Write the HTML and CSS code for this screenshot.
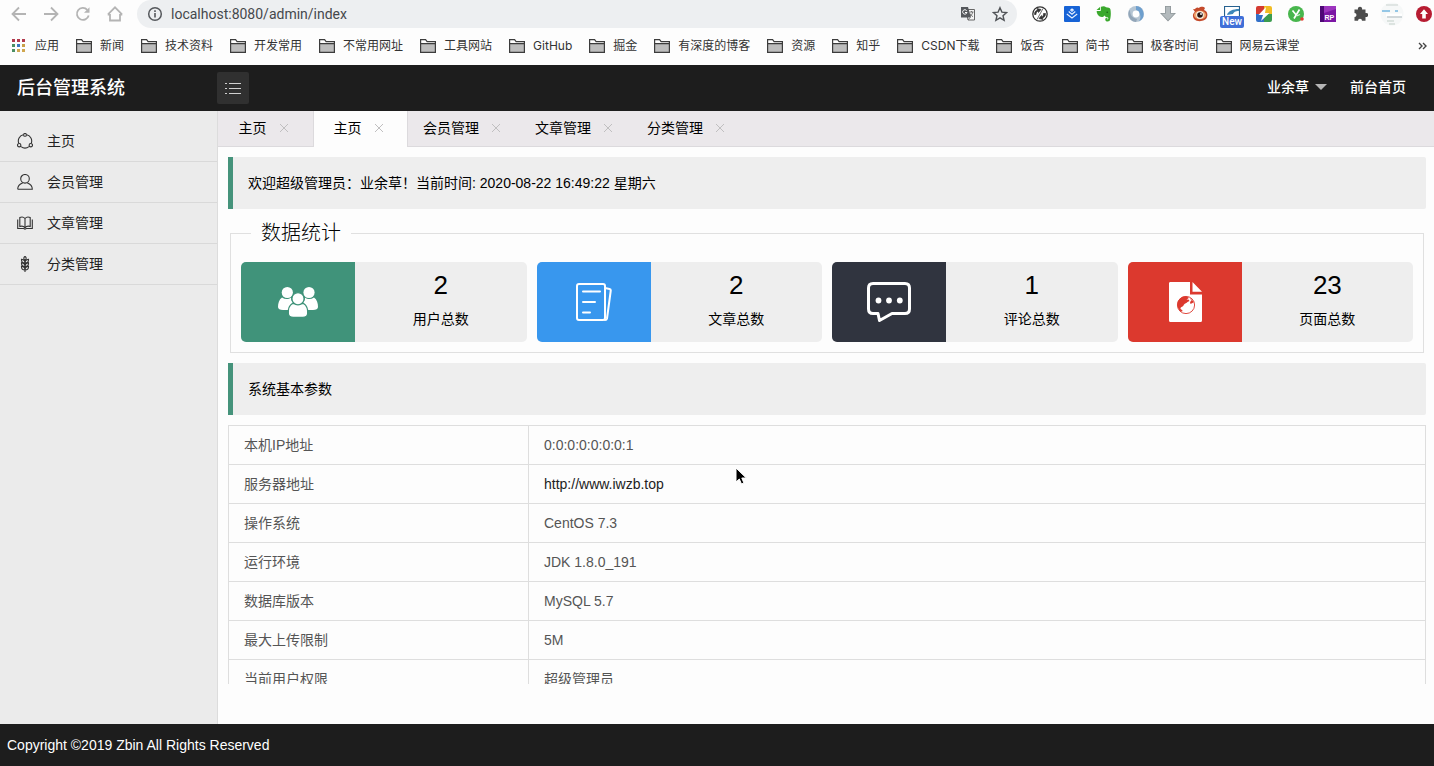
FILE: index.html
```html
<!DOCTYPE html>
<html lang="zh-CN">
<head>
<meta charset="utf-8">
<title>后台管理系统</title>
<link rel="stylesheet" href="styles.css">
</head>
<body>
<svg class="defs" aria-hidden="true">
  <symbol id="folder" viewBox="0 0 16 14"><path d="M.5 13V1h5l1.500 2H15.500V13Z" fill="#fff"/><path d="M1 5h14v8H1z" fill="#bdbdbd"/><path d="M.6 13.300V.7h5l1.500 1.900h8.300v10.700ZM.6 4.600h14.800" fill="none" stroke="#3c3c3c" stroke-width="1.200"/></symbol>
  <symbol id="close" viewBox="0 0 10 10"><path d="M1 1l8 8M9 1L1 9" fill="none" stroke="#c0bfc0" stroke-width="1"/></symbol>
</svg>

<div class="browser">
  <div class="toolbar">
    <div class="nav">
      <button class="icon-btn" aria-label="后退"><svg width="16" height="16" viewBox="0 0 16 16"><path d="M15 8H2M8 1.500L1.500 8 8 14.500" /></svg></button>
      <button class="icon-btn" aria-label="前进"><svg width="16" height="16" viewBox="0 0 16 16"><path d="M1 8h13M8 1.500L14.500 8 8 14.500"/></svg></button>
      <button class="icon-btn" aria-label="刷新"><svg width="16" height="16" viewBox="0 0 16 16"><path d="M13.700 9.500A6 6 0 1 1 12.300 3.800"/><path d="M14.500 1.200v5.600H9z" class="solid"/></svg></button>
      <button class="icon-btn" aria-label="首页"><svg width="16" height="16" viewBox="0 0 16 16"><path d="M3 8v6.500h10V8M.7 8.500H3M13 8.500h2.300M1 8.400L8 1.300l7 7.100"/></svg></button>
    </div>
    <div class="address">
      <svg width="16" height="16" viewBox="0 0 16 16"><circle cx="8" cy="8" r="6.300" fill="none" stroke="#55585c" stroke-width="1.500"/><path d="M8 7v4.500M8 4.200v1.700" stroke="#55585c" stroke-width="1.600"/></svg>
      <input class="url" type="text" aria-label="地址" value="localhost:8080/admin/index">
      <button class="icon-btn inner" aria-label="翻译"><svg width="16" height="16" viewBox="0 0 16 16"><path d="M6 3.500h8.500v10.500H8z" fill="#f4f4f4" stroke="#666" stroke-width="1"/><path d="M1 1h7l3 10.500H1z" fill="#55585c"/><path d="M6.700 4.700A2.200 2.200 0 1 0 7 6.500H5" fill="none" stroke="#fff" stroke-width="1"/><path d="M9.500 6h4M11.500 5v1M12.700 6c-.3 2-1.200 3-2.700 4M10 7.500c.6 1.500 1.800 2.600 3 3.200M8 14l2-2.500" fill="none" stroke="#666" stroke-width=".9"/></svg></button>
      <button class="icon-btn inner" aria-label="收藏"><svg width="16" height="16" viewBox="0 0 16 16"><path d="M8 1.700l1.900 4.400 4.700.4-3.600 3.200 1.100 4.600L8 11.800l-4.100 2.500L5 9.700 1.400 6.500l4.700-.4z" fill="none" stroke="#505357" stroke-width="1.400"/></svg></button>
    </div>
    <div class="extensions">
      <svg viewBox="0 0 16 16"><circle cx="8" cy="8" r="7.200" fill="#fff" stroke="#333" stroke-width="1.300"/><path d="M5 13.500L11 2.500M2.500 8.500c0-3 1.500-4 3-4.500l-.5-1.500 4 1-2.500 3-.5-1.500C4.500 5.500 4 7 4 8.500zM13.500 7.500c0 3-1.500 4-3 4.500l.5 1.500-4-1 2.500-3 .5 1.500c1-.5 1.500-2 1.500-3.500z" fill="#333" stroke="#333" stroke-width=".7"/></svg>
      <svg viewBox="0 0 16 16"><rect width="16" height="16" rx="1" fill="#1763d6"/><path d="M8 3l1.300 1.100L8 5.200 6.700 4.100zM4.700 5.500L8 8.200l3.300-2.700M2.800 8L8 12l5.200-4" fill="none" stroke="#e8f1ff" stroke-width="1.100"/></svg>
      <svg viewBox="0 0 16 16"><path d="M5 .8c2-1 4-.7 5 .5 2 .1 4 .5 4.400 2 .7 3 .5 8-.5 11-.5 1.500-4 1.700-4.500 0-.5-2 .5-3 2.200-2.500v1h-1c0 1 1.600.7 1.700-.3.100-1-.9-1.500-1.900-1.500-1.500 0-1.500-1.500-2-1.500C7 12 3.500 11 2 9 .8 7.500.5 5.500.8 5h3.700L5 4z" fill="#3aa82d"/><path d="M.6 4L4.200.8V4z" fill="#3aa82d"/><circle cx="11.200" cy="6.300" r=".8" fill="#1b5f18"/></svg>
      <svg viewBox="0 0 16 16"><circle cx="8" cy="8" r="8" fill="#b5c5d3"/><path d="M8 0a8 8 0 0 1 3 15.200C14 11 12 6 8 4z" fill="#6e9fce"/><path d="M8 16a8 8 0 0 1-6-12.500C2 9 4 12 9 13z" fill="#93a6b8"/><circle cx="8" cy="8" r="3.400" fill="#fff"/></svg>
      <svg viewBox="0 0 16 16"><path d="M5 0h6v7h5l-8 8.500L0 7h5z" fill="#8f979a"/><path d="M5.800.8h4.400v7h4L8 14.300 1.800 7.800h4z" fill="#b3babd"/></svg>
      <svg viewBox="0 0 16 16"><path d="M1 3c3 1 3-3 6-1 2-2 5-1 6 0l-1 2c3 1 4 4 3 7-1 4-9 6-13 2-2-3-1-6 1-7z" fill="#c44a2b"/><ellipse cx="8" cy="9" rx="6" ry="4.300" fill="#f1ab74"/><circle cx="8" cy="9" r="3.700" fill="#fff"/><circle cx="8" cy="9" r="2.800" fill="#2c1712"/><circle cx="9" cy="8" r=".9" fill="#fff"/></svg>
      <span class="ext-badged"><svg viewBox="0 0 16 16"><path d="M.5 10V.5h15V10" fill="#fff" stroke="#27618f" stroke-width="1.200"/><path d="M3 9c1-4 6-6 12-6v2c-4 0-5 1-6 3z" fill="#3e87b9"/></svg><span class="badge">New</span></span>
      <svg viewBox="0 0 16 16"><path d="M2 0h6v8H0V2a2 2 0 0 1 2-2z" fill="#d43a31"/><path d="M8 0h6a2 2 0 0 1 2 2v6H8z" fill="#f1bc24"/><path d="M0 8h8v8H2a2 2 0 0 1-2-2z" fill="#3270c8"/><path d="M8 8h8v6a2 2 0 0 1-2 2H8z" fill="#3c9c50"/><path d="M10 1L2.500 9H7l-2 6 8.500-8H9z" fill="#fff"/></svg>
      <svg viewBox="0 0 16 16"><circle cx="8" cy="8" r="8" fill="#48b64d"/><path d="M4.500 4.500l3.300 4M11.500 3.500L6 12.500" stroke="#fff" stroke-width="1.700" fill="none"/><path d="M8.500 10l3.500-1.500" stroke="#d7f3d8" stroke-width="1.300"/><circle cx="14" cy="13" r="1.800" fill="#e43d34"/></svg>
      <svg viewBox="0 0 16 16"><rect width="16" height="16" fill="#7c16a5"/><path d="M0 0h4v16H0z" fill="#4d0875"/><path d="M4 0h12v3L4 7z" fill="#9c35be"/><text x="4.500" y="14" class="rp">RP</text></svg>
      <svg viewBox="0 0 16 16"><path d="M2.500 3.500H6A2.100 2.100 0 1 1 10 3.500h3.500V7A2.100 2.100 0 1 1 13.500 11v3.700H10a2 2 0 1 0-4 0H2.500V11A2 2 0 1 0 2.500 7z" fill="#4c4c4c"/></svg>
      <svg class="avatar" viewBox="0 0 24 24"><circle cx="12" cy="12" r="11.500" fill="#f6f8f8"/><path d="M6 3h12" stroke="#c9d2cf"/><path d="M2 9h8M15 9h3" stroke="#76b6df" stroke-width="1.500"/><path d="M6 13h16" stroke="#fff" stroke-width="3"/><path d="M7 15h15" stroke="#a9b5ba"/><path d="M7 19h7M9 22h6" stroke="#c2cfc8"/></svg>
      <svg viewBox="0 0 16 16"><circle cx="8" cy="8" r="8" fill="#b71c32"/><path d="M8 3.200L12 8H9.800v4.500H6.200V8H4z" fill="#fff"/></svg>
    </div>
  </div>
  <nav class="bookmarks" aria-label="书签">
    <a href="#"><svg class="apps" width="16" height="14" viewBox="0 0 16 14"><path d="M1 0h3v3H1zM6 0h3v3H6zM11 0h3v3h-3z" fill="#b23a4d"/><path d="M1 5h3v3H1z" fill="#4b8f63"/><path d="M6 5h3v3H6z" fill="#3a78c0"/><path d="M11 5h3v3h-3z" fill="#c8a048"/><path d="M1 10h3v3H1z" fill="#4b8f63"/><path d="M6 10h3v3H6zM11 10h3v3h-3z" fill="#d0a74f"/></svg>应用</a>
    <a href="#"><svg width="16" height="14"><use href="#folder"/></svg>新闻</a>
    <a href="#"><svg width="16" height="14"><use href="#folder"/></svg>技术资料</a>
    <a href="#"><svg width="16" height="14"><use href="#folder"/></svg>开发常用</a>
    <a href="#"><svg width="16" height="14"><use href="#folder"/></svg>不常用网址</a>
    <a href="#"><svg width="16" height="14"><use href="#folder"/></svg>工具网站</a>
    <a href="#"><svg width="16" height="14"><use href="#folder"/></svg>GitHub</a>
    <a href="#"><svg width="16" height="14"><use href="#folder"/></svg>掘金</a>
    <a href="#"><svg width="16" height="14"><use href="#folder"/></svg>有深度的博客</a>
    <a href="#"><svg width="16" height="14"><use href="#folder"/></svg>资源</a>
    <a href="#"><svg width="16" height="14"><use href="#folder"/></svg>知乎</a>
    <a href="#"><svg width="16" height="14"><use href="#folder"/></svg>CSDN下载</a>
    <a href="#"><svg width="16" height="14"><use href="#folder"/></svg>饭否</a>
    <a href="#"><svg width="16" height="14"><use href="#folder"/></svg>简书</a>
    <a href="#"><svg width="16" height="14"><use href="#folder"/></svg>极客时间</a>
    <a href="#"><svg width="16" height="14"><use href="#folder"/></svg>网易云课堂</a>
    <button class="more" aria-label="更多书签"><svg width="9" height="8" viewBox="0 0 9 8"><path d="M1 1l3 3-3 3M5 1l3 3-3 3" fill="none" stroke="#444" stroke-width="1.400"/></svg></button>
  </nav>
</div>

<header class="header">
  <h1 class="logo">后台管理系统</h1>
  <button class="toggle" aria-label="切换菜单"><svg width="16" height="12" viewBox="0 0 16 12"><path d="M0 1.500h2M4 1.500h12M0 6.500h2M4 6.500h12M0 11.500h2M4 11.500h12" stroke="#d0d0d0" stroke-width="1"/></svg></button>
  <div class="header-right">
    <button class="user">业余草<span class="caret"></span></button>
    <a href="#">前台首页</a>
  </div>
</header>

<div class="body">
  <nav class="sidebar" aria-label="主菜单">
    <a href="#"><svg viewBox="0 0 16 16"><path d="M6.200 1.700A6.500 6.500 0 0 0 1.700 10.200M9.800 1.700a6.500 6.500 0 0 1 4.500 8.500M4 13.600a6.700 6.700 0 0 0 8 0"/><circle cx="8" cy="1.900" r="1.400"/><circle cx="2.200" cy="12.200" r="1.700"/><circle cx="13.800" cy="12.200" r="1.700"/></svg>主页</a>
    <a href="#"><svg viewBox="0 0 16 16"><circle cx="8" cy="4.800" r="4.300"/><path d="M.7 15.300c0-3.400 2.600-5.500 5-6.300M10.300 9c2.400.8 5 2.900 5 6.300H.7"/></svg>会员管理</a>
    <a href="#"><svg viewBox="0 0 16 16"><path d="M8 3.500v9.300M8 3.500C6.500 1.700 4.500 1.700 2.800 2.500v9c1.900-.7 3.700-.5 5.200 1.300 1.500-1.800 3.300-2 5.200-1.300v-9C11.500 1.700 9.500 1.700 8 3.500M.7 4.500v9h5.800c.6.800 2.400.8 3 0h5.800v-9"/></svg>文章管理</a>
    <a href="#"><svg viewBox="0 0 16 16"><path d="M8 4v12M8 4C6.300 3 6.500 1.500 8 .3 9.500 1.500 9.700 3 8 4M8 7C5.500 7 4.300 5.800 4.500 3.300 6.800 3.700 8 4.700 8 7c0-2.300 1.200-3.300 3.500-3.700C11.700 5.800 10.500 7 8 7M8 10.500C5.500 10.500 4.300 9.300 4.500 6.800 6.800 7.200 8 8.200 8 10.500c0-2.300 1.200-3.300 3.500-3.700.2 2.500-1 3.700-3.500 3.700M8 14c-2.500 0-3.700-1.200-3.500-3.700C6.800 10.700 8 11.700 8 14c0-2.300 1.200-3.300 3.500-3.700.2 2.500-1 3.700-3.500 3.700"/></svg>分类管理</a>
  </nav>

  <main class="main">
    <div class="tabs">
      <div class="tab"><a href="#">主页</a><button aria-label="关闭主页"><svg width="10" height="10"><use href="#close"/></svg></button></div>
      <div class="tab active"><a href="#">主页</a><button aria-label="关闭主页"><svg width="10" height="10"><use href="#close"/></svg></button></div>
      <div class="tab"><a href="#">会员管理</a><button aria-label="关闭会员管理"><svg width="10" height="10"><use href="#close"/></svg></button></div>
      <div class="tab"><a href="#">文章管理</a><button aria-label="关闭文章管理"><svg width="10" height="10"><use href="#close"/></svg></button></div>
      <div class="tab"><a href="#">分类管理</a><button aria-label="关闭分类管理"><svg width="10" height="10"><use href="#close"/></svg></button></div>
    </div>

    <div class="pane">
      <div class="quote">欢迎超级管理员：业余草！当前时间: 2020-08-22 16:49:22 星期六</div>

      <fieldset class="stats">
        <legend>数据统计</legend>
        <div class="cards">
          <div class="card">
            <div class="card-icon green"><svg width="40" height="32" viewBox="0 0 40 32"><g fill="#fff"><circle cx="9.300" cy="6.500" r="5.600"/><circle cx="31" cy="6.500" r="5.600"/><path d="M4 11.500c-3 2-4 6-4 9.500 0 2 2 3 5 3h6c.5-4 2-6 4-7.500-1.500-1.300-2-3-2-5-2.500 2-6 2-9 0zM36 11.500c3 2 4 6 4 9.500 0 2-2 3-5 3h-6c-.5-4-2-6-4-7.500 1.500-1.300 2-3 2-5 2.500 2 6 2 9 0z"/></g><g fill="#fff" stroke="#40937a" stroke-width="1.300"><path d="M14.500 17.500c-3.500 2-4.500 6-4.200 10 .2 2.500 2 3.800 5 3.800h9.500c3 0 4.700-1.300 4.900-3.800.3-4-1-8-4.200-10z"/><circle cx="20" cy="12.700" r="6.100"/></g></svg></div>
            <div class="card-text"><strong>2</strong><span>用户总数</span></div>
          </div>
          <div class="card">
            <div class="card-icon blue"><svg width="36" height="40" viewBox="0 0 36 40"><g fill="none" stroke="#fff" stroke-width="2" stroke-linecap="round" stroke-linejoin="round"><rect x="1" y="2" width="28" height="36" rx="2"/><path d="M7 9.500h17M7 20h12M7 30.500h7M29 6l4.500 1q1.500.3 1.200 2L31 36.500q-.3 1.500-2 1.500"/></g></svg></div>
            <div class="card-text"><strong>2</strong><span>文章总数</span></div>
          </div>
          <div class="card">
            <div class="card-icon dark"><svg width="44" height="40" viewBox="0 0 44 40"><path d="M6 1.500h32q4.500 0 4.500 4.500v21q0 4.500-4.500 4.500H25L12.500 38.500 11 31.500H6Q1.500 31.500 1.500 27V6Q1.500 1.500 6 1.500z" fill="none" stroke="#fff" stroke-width="3" stroke-linejoin="round"/><g fill="#fff"><circle cx="11.500" cy="18.500" r="2.900"/><circle cx="22" cy="18.500" r="2.900"/><circle cx="32.800" cy="18.500" r="2.900"/></g></svg></div>
            <div class="card-text"><strong>1</strong><span>评论总数</span></div>
          </div>
          <div class="card">
            <div class="card-icon red"><svg width="34" height="40" viewBox="0 0 34 40"><path d="M2 0h20v12.500h12V38.500q0 1.500-1.500 1.500h-30Q1 40 1 38.500V1.500Q1 0 2 0zM24.500 0L34 9.800H24.500z" fill="#fff"/><circle cx="18" cy="23" r="8.600" fill="none" stroke="#dc392e" stroke-width=".9"/><path d="M18 14.300c-3 0-6 1.400-7.800 4.500-1.700 3.700-.6 7.500 1.800 10 1.700 1.500 3 .7 2.200-.8-.7-.6-2-.4-1.700-2 .5-1.600 2.500-1 3-2.600 1-2.400 2.500-1.400 4-3.400l2-1-1-1.500-2 .3 2.500-2zM21 15l5 5-1.500 1-2 1-.5-2 1.500-1.500z" fill="#dc392e"/></svg></div>
            <div class="card-text"><strong>23</strong><span>页面总数</span></div>
          </div>
        </div>
      </fieldset>

      <div class="quote">系统基本参数</div>

      <table class="params">
        <tbody>
          <tr><th scope="row">本机IP地址</th><td>0:0:0:0:0:0:0:1</td></tr>
          <tr><th scope="row">服务器地址</th><td><a href="#">http://www.iwzb.top</a></td></tr>
          <tr><th scope="row">操作系统</th><td>CentOS 7.3</td></tr>
          <tr><th scope="row">运行环境</th><td>JDK 1.8.0_191</td></tr>
          <tr><th scope="row">数据库版本</th><td>MySQL 5.7</td></tr>
          <tr><th scope="row">最大上传限制</th><td>5M</td></tr>
          <tr><th scope="row">当前用户权限</th><td>超级管理员</td></tr>
        </tbody>
      </table>
    </div>
  </main>
</div>

<footer class="footer">Copyright ©2019 Zbin All Rights Reserved</footer>

<svg class="cursor" width="14" height="20" viewBox="0 0 14 20" aria-hidden="true"><path d="M1 1v14l3.300-3 2.200 5 2.400-1-2.100-5h4.500z" fill="#000" stroke="#fff" stroke-width="1"/></svg>
</body>
</html>
```
FILE: styles.css
```css
* {
  box-sizing: border-box;
}

body {
  margin: 0;
  height: 100vh;
  display: flex;
  flex-direction: column;
  overflow: hidden;
  background: #fdfdfd;
  color: #000;
  font: 14px/24px "Liberation Sans", "Noto Sans CJK SC", sans-serif;
}

a {
  color: inherit;
  text-decoration: none;
}

button {
  border: 0;
  padding: 0;
  background: none;
  color: inherit;
  font: inherit;
  cursor: pointer;
}

svg {
  display: block;
  flex: none;
}

.defs {
  position: absolute;
  width: 0;
  height: 0;
}

/* Browser chrome */
.toolbar {
  display: flex;
  height: 28px;
  padding: 0 2px 0 3px;
}

.nav {
  display: flex;
  margin-right: 6px;
}

.icon-btn {
  display: flex;
  align-items: center;
  justify-content: center;
  width: 32px;
}

.nav path {
  fill: none;
  stroke: #b4b4b4;
  stroke-width: 1.8;
}

.nav .solid {
  fill: #b4b4b4;
  stroke: none;
}

.address {
  flex: 1;
  display: flex;
  align-items: center;
  min-width: 0;
  padding: 0 1px 0 10px;
  border-radius: 14px;
  background: #edeff1;
}

.url {
  flex: 1;
  min-width: 0;
  margin-left: 8px;
  padding: 0;
  border: 0;
  outline: 0;
  background: none;
  color: #45484c;
  font: 14px/20px Roboto, "Noto Sans CJK SC", sans-serif;
}

.extensions {
  display: flex;
  align-items: center;
  gap: 16px;
  margin-left: 15px;
}

.extensions svg {
  width: 16px;
  height: 16px;
}

.extensions .avatar {
  width: 24px;
  height: 24px;
  margin: 0 -4px;
}

.rp {
  fill: #fff;
  font: bold 7px "Liberation Sans", sans-serif;
}

.ext-badged {
  position: relative;
}

.badge {
  position: absolute;
  top: 10px;
  left: -4px;
  width: 24px;
  border-radius: 2px;
  background: #3f6fd8;
  color: #fff;
  font: 500 10px/12px Roboto, sans-serif;
  text-align: center;
}

.bookmarks {
  display: flex;
  align-items: center;
  gap: 17px;
  height: 37px;
  padding: 0 7px 2px 11px;
  color: #333;
  font: 12px/16px Inter, "Noto Sans CJK SC", sans-serif;
  white-space: nowrap;
}

.bookmarks a {
  display: flex;
  align-items: center;
  gap: 8px;
}

.more {
  margin-left: auto;
}

/* Application header */
.header {
  display: flex;
  align-items: center;
  height: 46px;
  flex: none;
  background: #1d1d1d;
  color: #fff;
}

.logo {
  width: 217px;
  margin: 0;
  padding-left: 17px;
  font-size: 18px;
  font-weight: 500;
}

.toggle {
  display: flex;
  align-items: center;
  justify-content: center;
  width: 32px;
  height: 32px;
  border-radius: 2px;
  background: #303030;
}

.header-right {
  display: flex;
  gap: 23px;
  margin-left: auto;
  padding: 0 28px 2px 0;
  font-weight: 500;
}

.user {
  display: flex;
  align-items: center;
  gap: 6px;
}

.caret {
  border: 6px solid transparent;
  border-top-color: #b5b5b5;
  border-bottom: 0;
}

/* Layout */
.body {
  flex: 1;
  display: flex;
  min-height: 0;
}

.sidebar {
  width: 218px;
  flex: none;
  padding-top: 10px;
  border-right: 1px solid #dcdcdc;
  background: #ebebeb;
  color: #222;
}

.sidebar a {
  display: flex;
  align-items: center;
  gap: 14px;
  height: 41px;
  padding-left: 17px;
  border-bottom: 1px solid #d9d9d9;
}

.sidebar svg {
  width: 16px;
  height: 16px;
  fill: none;
  stroke: #333;
  stroke-width: 1.1;
}

.main {
  flex: 1;
  display: flex;
  flex-direction: column;
  min-width: 0;
  padding-bottom: 40px;
}

.tabs {
  display: flex;
  flex: none;
  height: 36px;
  border-bottom: 1px solid #dcdadd;
  background: #ebe8eb;
}

.tab {
  display: flex;
  align-items: center;
  justify-content: center;
  gap: 8px;
  min-width: 95px;
  height: 35px;
  padding: 0 15px 2px;
}

.tab button {
  display: flex;
  align-items: center;
  justify-content: center;
  width: 18px;
  height: 18px;
}

.tab.active {
  height: 36px;
  padding-bottom: 3px;
  border: solid #dcdadd;
  border-width: 0 1px;
  background: #fdfdfd;
}

.pane {
  flex: 1;
  min-height: 0;
  overflow: hidden;
  padding: 10px 8px 0 10px;
}

.quote {
  padding: 14px 15px;
  border-left: 5px solid #45937b;
  border-radius: 0 2px 2px 0;
  background: #eee;
}

/* Statistics */
.stats {
  min-width: 0;
  margin: 9px 2px 10px;
  padding: 14px 10px 10px;
  border: 1px solid #e0e0e0;
}

.stats legend {
  margin-left: 10px;
  padding: 0 10px;
  font-size: 20px;
  font-weight: 300;
  line-height: 30px;
}

.cards {
  display: grid;
  grid-template-columns: repeat(4, 1fr);
  gap: 10px;
}

.card {
  display: grid;
  grid-template-columns: 2fr 3fr;
  height: 80px;
  border-radius: 5px;
  overflow: hidden;
  background: #eee;
}

.card-icon {
  display: flex;
  align-items: center;
  justify-content: center;
}

.green { background: #40937a; }
.blue { background: #3897ee; }
.dark { background: #30343f; }
.red { background: #dc392e; }

.card-text {
  display: flex;
  flex-direction: column;
  align-items: center;
  padding-top: 8px;
}

.card-text strong {
  margin-bottom: 7px;
  font-size: 26px;
  font-weight: 400;
  line-height: 30px;
}

/* Parameters */
.params {
  width: 100%;
  margin-top: 10px;
  border-collapse: collapse;
  table-layout: fixed;
  color: #555;
}

.params th,
.params td {
  height: 39px;
  padding: 0 15px;
  border: 1px solid #dedede;
  font-weight: 400;
  line-height: 20px;
  text-align: left;
}

.params th {
  width: 300px;
}

.params a {
  color: #222;
}

.footer {
  flex: none;
  height: 42px;
  padding: 0 7px;
  background: #1d1d1d;
  color: #fff;
  line-height: 42px;
}

.cursor {
  position: absolute;
  top: 467px;
  left: 735px;
}
```
